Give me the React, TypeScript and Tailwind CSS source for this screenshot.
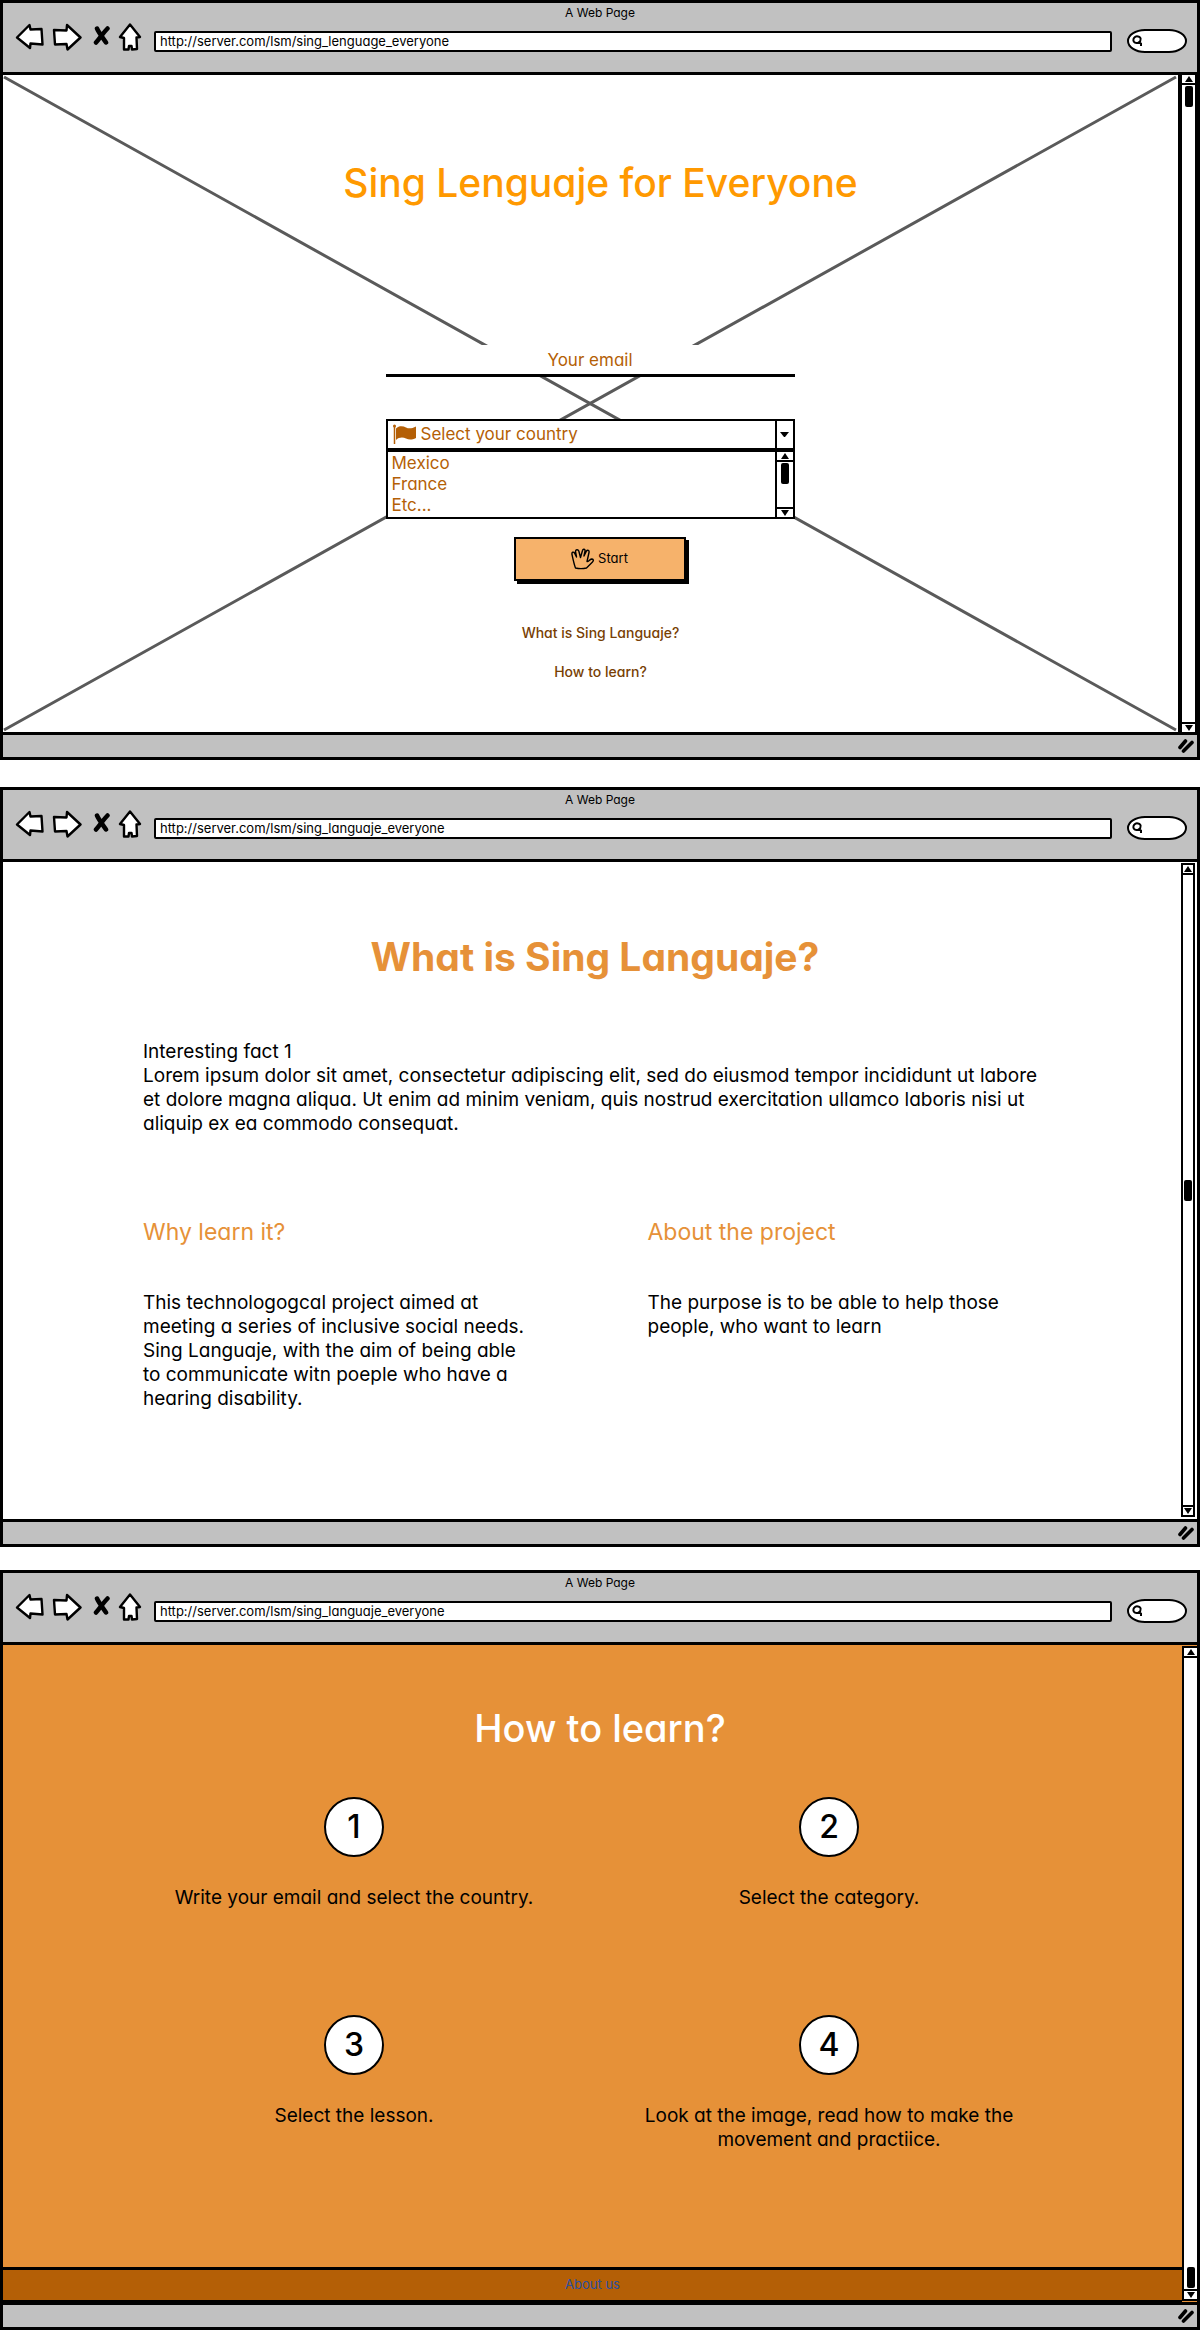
import type { ReactNode } from "react";

const body = "text-[19px] leading-6 text-black";

function BackIcon() {
  return (
    <svg width="31" height="28" viewBox="13 23 31 28" aria-hidden="true">
      <path d="M17 37.5 L29.5 25 L30.5 29.5 L41.5 29 L42.5 44.5 L30.5 43.5 L30 48 Z" fill="white" stroke="black" strokeWidth="2.4" strokeLinejoin="round" />
    </svg>
  );
}

function ForwardIcon() {
  return (
    <svg width="31" height="28" viewBox="52 23 31 28" aria-hidden="true">
      <path d="M54 30 L66.5 30.5 L67 25 L80.5 37.5 L67.5 49.5 L66.5 44 L55 44.5 Z" fill="white" stroke="black" strokeWidth="2.4" strokeLinejoin="round" />
    </svg>
  );
}

function StopIcon() {
  return (
    <svg width="19" height="28" viewBox="91 23 19 28" aria-hidden="true">
      <path d="M97 28.5 C99 33 103 38 106 42.5 M107.5 28.5 C103 33 100 38 96 42.5" fill="none" stroke="black" strokeWidth="4.5" strokeLinecap="round" />
    </svg>
  );
}

function HomeIcon() {
  return (
    <svg width="24" height="28" viewBox="118 23 24 28" aria-hidden="true">
      <path d="M130 24.5 L120 37 L124 38 L124 49.5 L128.5 49.5 L129 46 L131.5 46 L132 49.5 L137 49 L136.5 37.5 L140 37 Z" fill="white" stroke="black" strokeWidth="2.4" strokeLinejoin="round" />
    </svg>
  );
}

function Triangle({ up = false }: { up?: boolean }) {
  return (
    <svg width="8" height="6" viewBox="0 0 8 6" aria-hidden="true">
      <path d={up ? "M4 0 L8 6 L0 6 Z" : "M0 0 L8 0 L4 6 Z"} fill="black" />
    </svg>
  );
}

function Scrollbar({ frame, track }: { frame: string; track: string }) {
  return (
    <div className={`z-10 flex shrink-0 flex-col border-black bg-white ${frame}`}>
      <button aria-label="Scroll up" className="flex h-[10px] shrink-0 items-center justify-center border-b-2 border-black">
        <Triangle up />
      </button>
      <div className={`flex flex-1 flex-col items-center py-px ${track}`}>
        <div className="h-[21px] w-2 rounded-xs bg-black" />
      </div>
      <button aria-label="Scroll down" className="flex h-[10px] shrink-0 items-center justify-center border-t-2 border-black">
        <Triangle />
      </button>
    </div>
  );
}

function BrowserWindow({ url, children }: { url: string; children: ReactNode }) {
  return (
    <section className="flex flex-col border-[3px] border-black bg-[#c1c1c1]">
      <header className="border-b-[3px] border-black pb-[19px]">
        <p className="text-center text-[12px] leading-5">A Web Page</p>
        <div className="flex h-[30px] items-end gap-2 px-[10px]">
          <button aria-label="Back" className="self-start"><BackIcon /></button>
          <button aria-label="Forward" className="self-start"><ForwardIcon /></button>
          <button aria-label="Stop" className="self-start"><StopIcon /></button>
          <button aria-label="Home" className="self-start"><HomeIcon /></button>
          <input
            aria-label="Address"
            defaultValue={url}
            className="mb-px ml-1 h-[21px] min-w-0 flex-1 rounded-[2px] border-2 border-black bg-white px-1 pb-px text-[13px] leading-4 outline-none"
          />
          <label className="ml-[7px] flex h-6 w-[60px] items-center rounded-[18px/12px] border-2 border-black bg-white pl-[3px]">
            <svg width="11" height="13" viewBox="0 0 11 13" aria-hidden="true">
              <path d="M8.5 4.5 C8.5 7 6.5 8.5 4.5 8 C2 8 1 6 1.5 4 C2 2 4 1 6 1.5 C8 2 9 3 8.5 4.5 M6 7 L9 8.5 L9 11" fill="none" stroke="black" strokeWidth="2" />
            </svg>
            <input aria-label="Search" className="w-8 min-w-0 bg-transparent text-[12px] outline-none" />
          </label>
        </div>
      </header>
      {children}
      <footer className="flex h-[25px] items-center justify-end border-t-[3px] border-black pr-[3px]">
        <svg width="16" height="14" viewBox="0 0 16 14" aria-hidden="true">
          <path d="M2 8.5 L7.5 2 M5.5 12 L14 3.5" fill="none" stroke="black" strokeWidth="3.6" strokeLinecap="round" />
        </svg>
      </footer>
    </section>
  );
}

function FlagIcon() {
  return (
    <svg width="24" height="21" viewBox="0 0 24 21" aria-hidden="true">
      <path d="M2.5 2 V20" stroke="#b45f06" strokeWidth="1.5" />
      <circle cx="2.5" cy="2" r="1.5" fill="#b45f06" />
      <path d="M4 4.5 C7 1.5 11 2 14 3.5 C17 5 20 4.5 24 2.5 V14 C20 16 17 16 14 14.5 C11 13 7 13 4 16 Z" fill="#b45f06" />
    </svg>
  );
}

function HandIcon() {
  return (
    <svg width="24" height="22" viewBox="0 0 24 22" aria-hidden="true">
      <path d="M4.5 20 C3 16 2 11 1 6.5 C0.5 4 2.5 3.5 3.5 5 L5.5 9 L4.5 3.5 C4.5 1.5 7 1 7.8 3 L9.5 9.5 L11.5 2.5 C12 0.5 14.5 1 14 3.2 L13 8 L15.5 3 C16.500 1.5 18.5 2.5 18 4.5 L16 13.5 C17.5 14 18.5 11.5 20.5 11 C22.5 11 23 12.5 21.5 14 L15.5 20 C12 20.8 8 20.8 4.5 20 Z" fill="none" stroke="black" strokeWidth="1.4" strokeLinejoin="round" />
    </svg>
  );
}

function StartPage() {
  return (
    <div className="flex min-h-[657px] bg-white">
      <main className="relative flex min-w-0 flex-1 flex-col items-center pt-[84px]">
        <svg className="absolute inset-0 h-full w-full" viewBox="0 0 1175 657" preserveAspectRatio="none" aria-hidden="true">
          <path d="M1 2 L1173 655 M1173 2 L1 655" stroke="#5a5a5a" strokeWidth="3" />
        </svg>
        <h1 className="relative ml-5 text-[39px] leading-[48px] font-medium text-[#ff9900]">Sing Lenguaje for Everyone</h1>
        <form className="relative mt-[138px] mr-px w-[409px] max-w-full text-[17px] text-[#b45f06]">
          <input
            type="email"
            aria-label="Your email"
            placeholder="Your email"
            className="block h-8 w-full border-b-[3px] border-black bg-white text-center outline-none placeholder:text-[#b45f06]"
          />
          <div className="mt-[42px] flex h-[31px] items-center border-2 border-black bg-white pl-1">
            <FlagIcon />
            <select aria-label="Country" className="h-full min-w-0 flex-1 appearance-none bg-transparent pl-[5px] outline-none">
              <option>Select your country</option>
            </select>
            <span className="flex h-full w-[18px] items-center justify-center border-l-2 border-black">
              <svg width="9" height="5" viewBox="0 0 9 5" aria-hidden="true"><path d="M0 0 H9 L5 5 H4 Z" fill="black" /></svg>
            </span>
          </div>
          <div className="flex h-[69px] border-2 border-black bg-white">
            <ul role="listbox" aria-label="Countries" className="flex-1 pt-px pl-1 leading-[21px]">
              <li role="option" aria-selected="false">Mexico</li>
              <li role="option" aria-selected="false">France</li>
              <li role="option" aria-selected="false">Etc...</li>
            </ul>
            <Scrollbar frame="w-[18px] border-l-2" track="justify-start" />
          </div>
        </form>
        <button className="relative mt-[18px] ml-[18px] flex h-11 w-[172px] items-center justify-center gap-[3px] border-2 border-black bg-[#f6b26b] text-[13px] text-black shadow-[3px_3px_0_#000]">
          <HandIcon />
          Start
        </button>
        <nav className="relative mt-[42px] ml-5 flex flex-col items-center gap-[19px] text-[14px] leading-5 font-medium text-[#783f04]">
          <a href="#what">What is Sing Languaje?</a>
          <a href="#how">How to learn?</a>
        </nav>
      </main>
      <Scrollbar frame="w-[19px] border-l-4 border-r-2" track="justify-start" />
    </div>
  );
}

function AboutPage() {
  return (
    <div className="flex min-h-[657px] bg-white">
      <main id="what" className="min-w-0 flex-1 px-[140px] pt-[71px]">
        <h2 className="pl-[6px] text-center text-[39px] leading-[48px] font-bold text-[#e69138]">What is Sing Languaje?</h2>
        <p className={`mt-[59px] whitespace-nowrap ${body}`}>
          Interesting fact 1<br />
          Lorem ipsum dolor sit amet, consectetur adipiscing elit, sed do eiusmod tempor incididunt ut labore<br />
          et dolore magna aliqua. Ut enim ad minim veniam, quis nostrud exercitation ullamco laboris nisi ut<br />
          aliquip ex ea commodo consequat.
        </p>
        <div className="mt-[80px] grid grid-cols-2 gap-x-[111px]">
          <article>
            <h3 className="text-[23px] leading-8 text-[#e69138]">Why learn it?</h3>
            <p className={`mt-[43px] whitespace-nowrap ${body}`}>
              This technologogcal project aimed at<br />
              meeting a series of inclusive social needs.<br />
              Sing Languaje, with the aim of being able<br />
              to communicate witn poeple who have a<br />
              hearing disability.
            </p>
          </article>
          <article>
            <h3 className="text-[23px] leading-8 text-[#e69138]">About the project</h3>
            <p className={`mt-[43px] whitespace-nowrap ${body}`}>
              The purpose is to be able to help those<br />
              people, who want to learn
            </p>
          </article>
        </div>
      </main>
      <Scrollbar frame="mt-px mb-[2px] mr-[2px] w-[14px] border-2" track="justify-center" />
    </div>
  );
}

const steps = [
  ["Write your email and select the country."],
  ["Select the category."],
  ["Select the lesson."],
  ["Look at the image, read how to make the", "movement and practiice."],
];

function LearnPage() {
  return (
    <div className="flex min-h-[657px] bg-[#e69138]">
      <div className="flex min-w-0 flex-1 flex-col">
        <main id="how" className="flex flex-1 flex-col items-center pt-[59px]">
          <h2 className="ml-[15px] text-[38px] leading-[48px] font-medium text-white">How to learn?</h2>
          <ol className="mt-[45px] mr-[2px] grid w-[950px] max-w-full grid-cols-2 gap-y-[46px]">
            {steps.map((lines, i) => (
              <li key={i} className="flex min-h-[172px] flex-col items-center">
                <span className="flex size-[60px] items-center justify-center rounded-full border-2 border-black bg-white text-[32px] leading-10 font-medium">{i + 1}</span>
                <p className={`mt-[29px] text-center ${body}`}>
                  {lines.map((line) => (
                    <span key={line} className="block">{line}</span>
                  ))}
                </p>
              </li>
            ))}
          </ol>
        </main>
        <div className="flex h-[35px] items-center justify-center border-t-[3px] border-b-2 border-black bg-[#b45f06] pb-[2px]">
          <a href="#about" className="text-[13px] leading-5 text-[#2b4fa0]">About us</a>
        </div>
      </div>
      <Scrollbar frame="my-px w-[15px] border-2 border-r-0" track="justify-end" />
    </div>
  );
}

export default function App() {
  return (
    <div className="bg-white font-['Inter',sans-serif] text-black [font-feature-settings:'cv11']">
      <BrowserWindow url="http://server.com/lsm/sing_lenguage_everyone">
        <StartPage />
      </BrowserWindow>
      <div className="mt-[27px]">
        <BrowserWindow url="http://server.com/lsm/sing_languaje_everyone">
          <AboutPage />
        </BrowserWindow>
      </div>
      <div className="mt-[23px]">
        <BrowserWindow url="http://server.com/lsm/sing_languaje_everyone">
          <LearnPage />
        </BrowserWindow>
      </div>
    </div>
  );
}
